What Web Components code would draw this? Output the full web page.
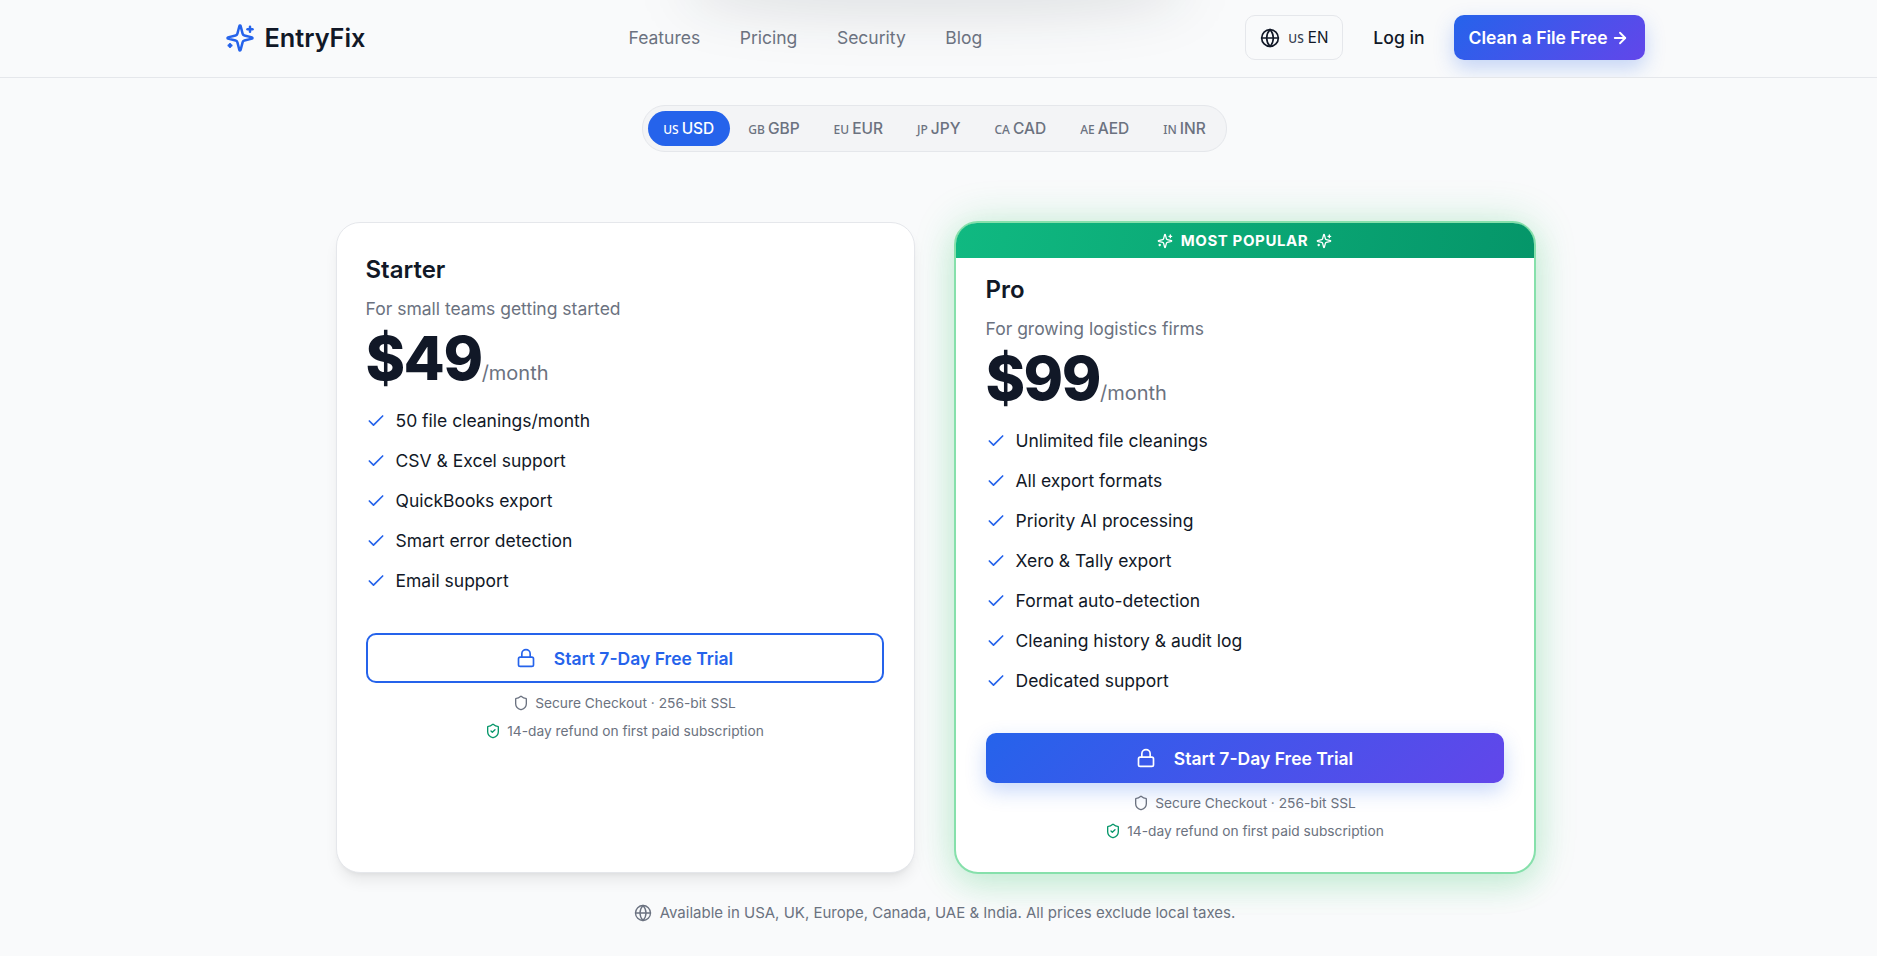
<!DOCTYPE html>
<html lang="en">
<head>
<meta charset="utf-8">
<title>EntryFix Pricing</title>
<style>
  html, body { margin: 0; height: 956px; overflow: hidden; background: #f9fafb; }
  body { font-family: Inter, "Liberation Sans", sans-serif; color: #111827; }
</style>
</head>
<body>
<site-header></site-header>
<currency-switch></currency-switch>
<plan-grid>
  <plan-card name="Starter" tagline="For small teams getting started" price="$49"
    features="50 file cleanings/month|CSV &amp; Excel support|QuickBooks export|Smart error detection|Email support"></plan-card>
  <plan-card popular name="Pro" tagline="For growing logistics firms" price="$99"
    features="Unlimited file cleanings|All export formats|Priority AI processing|Xero &amp; Tally export|Format auto-detection|Cleaning history &amp; audit log|Dedicated support"></plan-card>
</plan-grid>
<page-note></page-note>

<script>
const icons = {
  globe: '<circle cx="12" cy="12" r="10"/><path d="M12 2a14.5 14.5 0 0 0 0 20 14.5 14.5 0 0 0 0-20"/><path d="M2 12h20"/>',
  sparkles: '<path d="M9.937 15.5A2 2 0 0 0 8.5 14.063l-6.135-1.582a.5.5 0 0 1 0-.962L8.5 9.936A2 2 0 0 0 9.937 8.5l1.582-6.135a.5.5 0 0 1 .963 0L14.063 8.5A2 2 0 0 0 15.5 9.937l6.135 1.581a.5.5 0 0 1 0 .964L15.5 14.063a2 2 0 0 0-1.437 1.437l-1.582 6.135a.5.5 0 0 1-.963 0z"/><path d="M20 3v4"/><path d="M22 5h-4"/><path d="M4 17v2"/><path d="M5 18H3"/>',
  check: '<path d="M20 6 9 17l-5-5"/>',
  lock: '<rect width="18" height="11" x="3" y="11" rx="2" ry="2"/><path d="M7 11V7a5 5 0 0 1 10 0v4"/>',
  shield: '<path d="M20 13c0 5-3.5 7.5-7.66 8.95a1 1 0 0 1-.67-.01C7.5 20.5 4 18 4 13V6a1 1 0 0 1 1-1c2 0 4.5-1.2 6.24-2.72a1.17 1.17 0 0 1 1.52 0C14.51 3.81 17 5 19 5a1 1 0 0 1 1 1z"/>',
  shieldCheck: '<path d="M20 13c0 5-3.5 7.5-7.66 8.95a1 1 0 0 1-.67-.01C7.5 20.5 4 18 4 13V6a1 1 0 0 1 1-1c2 0 4.5-1.2 6.24-2.72a1.17 1.17 0 0 1 1.52 0C14.51 3.81 17 5 19 5a1 1 0 0 1 1 1z"/><path d="m9 12 2 2 4-4"/>',
  arrow: '<path d="M5 12h14"/><path d="m12 5 7 7-7 7"/>'
}

const icon = (name, size, stroke = 2) =>
  `<svg xmlns="http://www.w3.org/2000/svg" width="${size}" height="${size}" viewBox="0 0 24 24" fill="none" stroke="currentColor" stroke-width="${stroke}" stroke-linecap="round" stroke-linejoin="round">${icons[name]}</svg>`

class SiteHeader extends HTMLElement {
  constructor () {
    super()
    this.shadow = this.attachShadow({ mode: 'open' })
  }

  connectedCallback () {
    this.shadow.innerHTML = /*html*/`
    <style>
      :host {
        border-bottom: 1px solid #e5e7eb;
        display: block;
        height: 77px;
        overflow: hidden;
        padding-right: 8px;
        position: relative;
      }

      .blob {
        background: rgba(17, 24, 39, 0.11);
        border-radius: 40%;
        filter: blur(26px);
        height: 60px;
        left: 685px;
        position: absolute;
        top: -44px;
        width: 500px;
      }

      .bar {
        align-items: center;
        display: flex;
        height: 75px;
        justify-content: space-between;
        margin: 0 auto;
        position: relative;
        width: 1420px;
      }

      .logo {
        align-items: center;
        color: #111827;
        display: flex;
        font-size: 25.3px;
        font-weight: 600;
        gap: 10px;
      }

      .logo svg { color: #2563eb; }

      nav {
        display: flex;
        gap: 39.6px;
        left: 404px;
        position: absolute;
      }

      nav a {
        color: #6b7280;
        font-size: 17.5px;
        font-weight: 400;
      }

      .right {
        align-items: center;
        display: flex;
      }

      .lang {
        align-items: center;
        border: 1px solid #e5e7eb;
        border-radius: 10px;
        box-sizing: border-box;
        color: #111827;
        display: flex;
        font-size: 15.2px;
        gap: 8px;
        height: 45px;
        justify-content: center;
        width: 98px;
      }

      .flag {
        font-family: "Noto Sans", sans-serif;
        font-size: 12px;
        font-weight: 500;
        margin-right: 4px;
      }

      .lang .flag { color: #374151; }

      .login {
        color: #111827;
        font-size: 17.6px;
        font-weight: 500;
        margin: 0 29px 0 30px;
      }

      .cta {
        align-items: center;
        background: linear-gradient(135deg, #2563eb, #6246ea);
        border-radius: 10px;
        box-shadow: 0 8px 20px rgba(37, 99, 235, 0.25);
        color: #fff;
        display: flex;
        font-size: 17.5px;
        font-weight: 600;
        gap: 4px;
        height: 45px;
        justify-content: center;
        width: 191px;
      }
    </style>
    <div class="blob"></div>
    <div class="bar">
      <div class="logo">${icon('sparkles', 30)}<span>EntryFix</span></div>
      <nav><a>Features</a><a>Pricing</a><a>Security</a><a>Blog</a></nav>
      <div class="right">
        <div class="lang">${icon('globe', 20)}<span><span class="flag">US</span>EN</span></div>
        <a class="login">Log in</a>
        <a class="cta">Clean a File Free ${icon('arrow', 18, 2.4)}</a>
      </div>
    </div>
    `
  }
}

class CurrencySwitch extends HTMLElement {
  constructor () {
    super()
    this.shadow = this.attachShadow({ mode: 'open' })
  }

  connectedCallback () {
    const list = [['US', 'USD'], ['GB', 'GBP'], ['EU', 'EUR'], ['JP', 'JPY'], ['CA', 'CAD'], ['AE', 'AED'], ['IN', 'INR']]

    this.shadow.innerHTML = /*html*/`
    <style>
      :host {
        display: flex;
        justify-content: center;
        padding-top: 27px;
        width: 1869px;
      }

      .pill {
        align-items: center;
        background: #f3f4f6;
        border: 1px solid #e5e7eb;
        border-radius: 23px;
        display: flex;
        gap: 3px;
        height: 45px;
        padding: 0 5px;
      }

      button {
        background: none;
        border: none;
        border-radius: 18px;
        color: #6b7280;
        font: 500 15.5px Inter, "Liberation Sans", sans-serif;
        height: 35px;
        line-height: 35px;
        padding: 0 15.5px;
        white-space: nowrap;
      }

      .flag {
        font-family: "Noto Sans", sans-serif;
        font-size: 12px;
        margin-right: 3px;
      }

      button.on {
        background: #2563eb;
        color: #fff;
      }
    </style>
    <div class="pill">
      ${list.map((c, i) => `<button class="${i == 0 ? 'on' : ''}"><span class="flag">${c[0]}</span>${c[1]}</button>`).join('')}
    </div>
    `
  }
}

class PlanGrid extends HTMLElement {
  constructor () {
    super()
    this.shadow = this.attachShadow({ mode: 'open' })
  }

  connectedCallback () {
    this.shadow.innerHTML = /*html*/`
    <style>
      :host {
        display: grid;
        gap: 39px;
        grid-template-columns: 579px 582px;
        grid-template-rows: 651px;
        justify-content: center;
        padding-top: 70px;
        width: 1871px;
      }
    </style>
    <slot></slot>
    `
  }
}

class PlanCard extends HTMLElement {
  constructor () {
    super()
    this.shadow = this.attachShadow({ mode: 'open' })
  }

  connectedCallback () {
    const popular = this.hasAttribute('popular')
    const features = this.getAttribute('features').split('|')

    this.shadow.innerHTML = /*html*/`
    <style>
      :host {
        background: #fff;
        border: 1px solid #e5e7eb;
        border-radius: 24px;
        box-shadow: 0 10px 15px -3px rgba(0, 0, 0, 0.08), 0 4px 6px -4px rgba(0, 0, 0, 0.08);
        box-sizing: border-box;
        display: block;
        overflow: hidden;
      }

      :host([popular]) {
        border: 2px solid #86e0ab;
        box-shadow: 0 0 40px rgba(34, 197, 94, 0.22), 0 14px 30px rgba(34, 197, 94, 0.12);
        margin: -1px 0;
        overflow: visible;
      }

      .ribbon {
        align-items: center;
        background: linear-gradient(100deg, #10b981, #059669);
        border-radius: 21px 21px 0 0;
        color: #fff;
        display: flex;
        font-size: 15px;
        font-weight: 700;
        gap: 8px;
        height: 35px;
        justify-content: center;
        letter-spacing: 0.6px;
      }

      .body { padding: 31px 30px 0 29px; }

      :host([popular]) .body { padding: 16px 30px 0; }

      h3 {
        color: #111827;
        font-size: 24px;
        font-weight: 600;
        line-height: 32px;
        margin: 0;
      }

      .tagline {
        color: #6b7280;
        font-size: 17.5px;
        line-height: 24px;
        margin: 11px 0 0;
      }

      .price {
        align-items: baseline;
        display: flex;
        margin-top: 1px;
      }

      .price b {
        color: #111827;
        font-size: 60px;
        font-weight: 800;
        line-height: 72px;
        letter-spacing: -1.5px;
      }

      .price span {
        color: #6b7280;
        font-size: 20px;
      }

      ul {
        display: flex;
        flex-direction: column;
        gap: 16px;
        list-style: none;
        margin: 15px 0 0;
        padding: 0;
      }

      li {
        align-items: center;
        color: #111827;
        display: flex;
        font-size: 17.5px;
        gap: 10px;
        height: 24px;
        line-height: 24px;
      }

      li svg { color: #2563eb; }

      .go {
        align-items: center;
        border: 2px solid #2563eb;
        border-radius: 10px;
        box-sizing: border-box;
        color: #2563eb;
        display: flex;
        font-size: 17.5px;
        font-weight: 600;
        gap: 18px;
        height: 50px;
        justify-content: center;
        margin-top: 40px;
      }

      :host([popular]) .go {
        background: linear-gradient(135deg, #2563eb, #6246ea);
        border: none;
        box-shadow: 0 8px 20px rgba(37, 99, 235, 0.25);
        color: #fff;
      }

      .small {
        align-items: center;
        color: #6b7280;
        display: flex;
        font-size: 13.75px;
        gap: 6px;
        justify-content: center;
        line-height: 20px;
      }

      .small.one { margin-top: 10px; }
      .small.two { margin-top: 8px; }
      .small.two svg { color: #059669; }
    </style>
    ${popular ? `<div class="ribbon">${icon('sparkles', 16)}<span>MOST POPULAR</span>${icon('sparkles', 16)}</div>` : ''}
    <div class="body">
      <h3>${this.getAttribute('name')}</h3>
      <p class="tagline">${this.getAttribute('tagline')}</p>
      <div class="price"><b>${this.getAttribute('price')}</b><span>/month</span></div>
      <ul>
        ${features.map(f => `<li>${icon('check', 20)}<span>${f.replace('&', '&amp;')}</span></li>`).join('')}
      </ul>
      <div class="go">${icon('lock', 20)}<span>Start 7-Day Free Trial</span></div>
      <div class="small one">${icon('shield', 16)}<span>Secure Checkout · 256-bit SSL</span></div>
      <div class="small two">${icon('shieldCheck', 16)}<span>14-day refund on first paid subscription</span></div>
    </div>
    `
  }
}

class PageNote extends HTMLElement {
  constructor () {
    super()
    this.shadow = this.attachShadow({ mode: 'open' })
  }

  connectedCallback () {
    this.shadow.innerHTML = /*html*/`
    <style>
      :host {
        align-items: center;
        color: #6b7280;
        display: flex;
        font-size: 15px;
        gap: 8px;
        justify-content: center;
        padding-top: 30px;
        width: 1869px;
      }
    </style>
    ${icon('globe', 18, 1.8)}<span>Available in USA, UK, Europe, Canada, UAE &amp; India. All prices exclude local taxes.</span>
    `
  }
}

customElements.define('site-header', SiteHeader)
customElements.define('currency-switch', CurrencySwitch)
customElements.define('plan-grid', PlanGrid)
customElements.define('plan-card', PlanCard)
customElements.define('page-note', PageNote)
</script>
</body>
</html>
